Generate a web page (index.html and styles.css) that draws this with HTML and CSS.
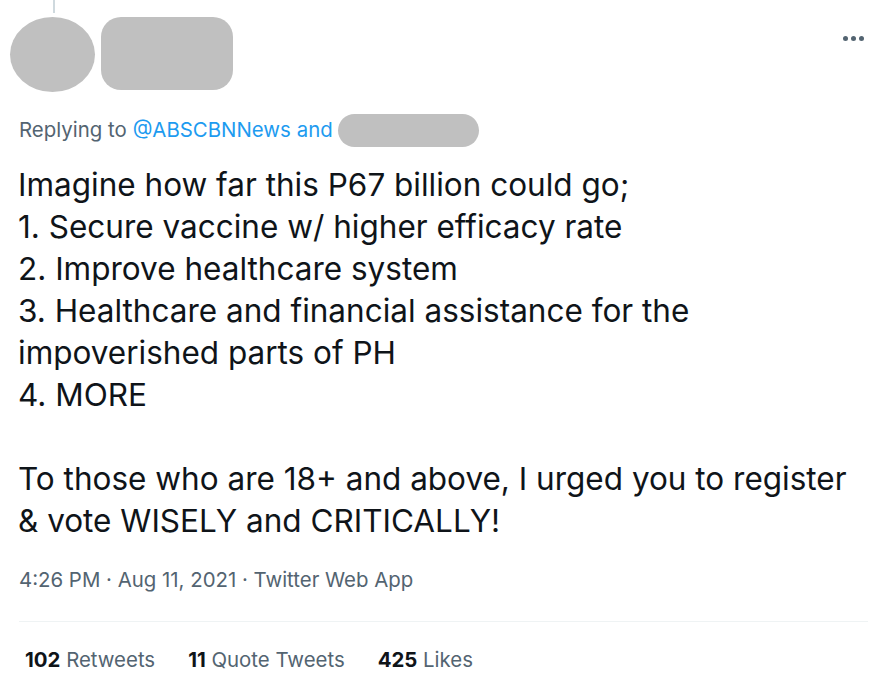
FILE: index.html
```html
<!DOCTYPE html>
<html>
	<head>
		<title>Tweet</title>
		<link rel="stylesheet" href="styles.css">
	</head>
	<body>
		<div class="tweet">
			<div class="thread-line"></div>
			<div class="head">
				<div class="avatar"></div>
				<div class="name-blur"></div>
				<div class="more"><span></span><span></span><span></span></div>
			</div>
			<div class="reply">Replying to <a>@ABSCBNNews</a> <a>and</a> <span class="handle-blur"></span></div>
			<div class="text">Imagine how far this P67 billion could go;
1. Secure vaccine w/ higher efficacy rate
2. Improve healthcare system
3. Healthcare and financial assistance for the impoverished parts of PH
4. MORE

To those who are 18+ and above, I urged you to register &amp; vote WISELY and CRITICALLY!</div>
			<div class="meta">4:26 PM · Aug 11, 2021 · Twitter Web App</div>
			<div class="stats">
				<span><b>102</b> Retweets</span>
				<span><b>11</b> Quote Tweets</span>
				<span><b>425</b> Likes</span>
			</div>
		</div>
	</body>
</html>
```

FILE: styles.css
```css
html, body {margin: 0; padding: 0; background: #fff;}
body {font-family: Inter, "Noto Sans", sans-serif; color: #0f1419;}

.tweet {width: 866px; padding-left: 10px;}
.thread-line {width: 2px; height: 13px; margin-left: 43px; background: #cfd9de;}

.head {display: flex; align-items: flex-start; margin-top: 4px; height: 75px;}
.avatar {width: 85px; height: 75px; border-radius: 50%; background: #c0c0c0;}
.name-blur {width: 132px; height: 73px; margin-left: 6px; border-radius: 20px; background: #c0c0c0;}
.more {display: flex; gap: 3px; margin-left: auto; margin-top: 19px; margin-right: 12px;}
.more span {width: 5px; height: 5px; border-radius: 50%; background: #536471;}

.reply {margin: 23px 0 0 9px; font-size: 20.4px; line-height: 30px; color: #536471; height: 30px; display: flex; align-items: center;}
.reply a {color: #1d9bf0; margin-left: 6px;}
.handle-blur {display: inline-block; width: 141px; height: 33px; border-radius: 17px; background: #c0c0c0; margin-left: 5px;}

.text {margin: 19px 0 0 8px; font-size: 31.5px; line-height: 42px; white-space: pre-line; width: 848px;}

.meta {margin: 23px 0 0 9px; font-size: 20.4px; line-height: 30px; color: #536471;}

.stats {margin: 26px 8px 0 9px; border-top: 1px solid #eff3f4; padding: 23px 0 0 6px; display: flex; gap: 33px; font-size: 20.4px; line-height: 30px; color: #536471;}
.stats b {color: #0f1419; font-weight: 700;}
```
